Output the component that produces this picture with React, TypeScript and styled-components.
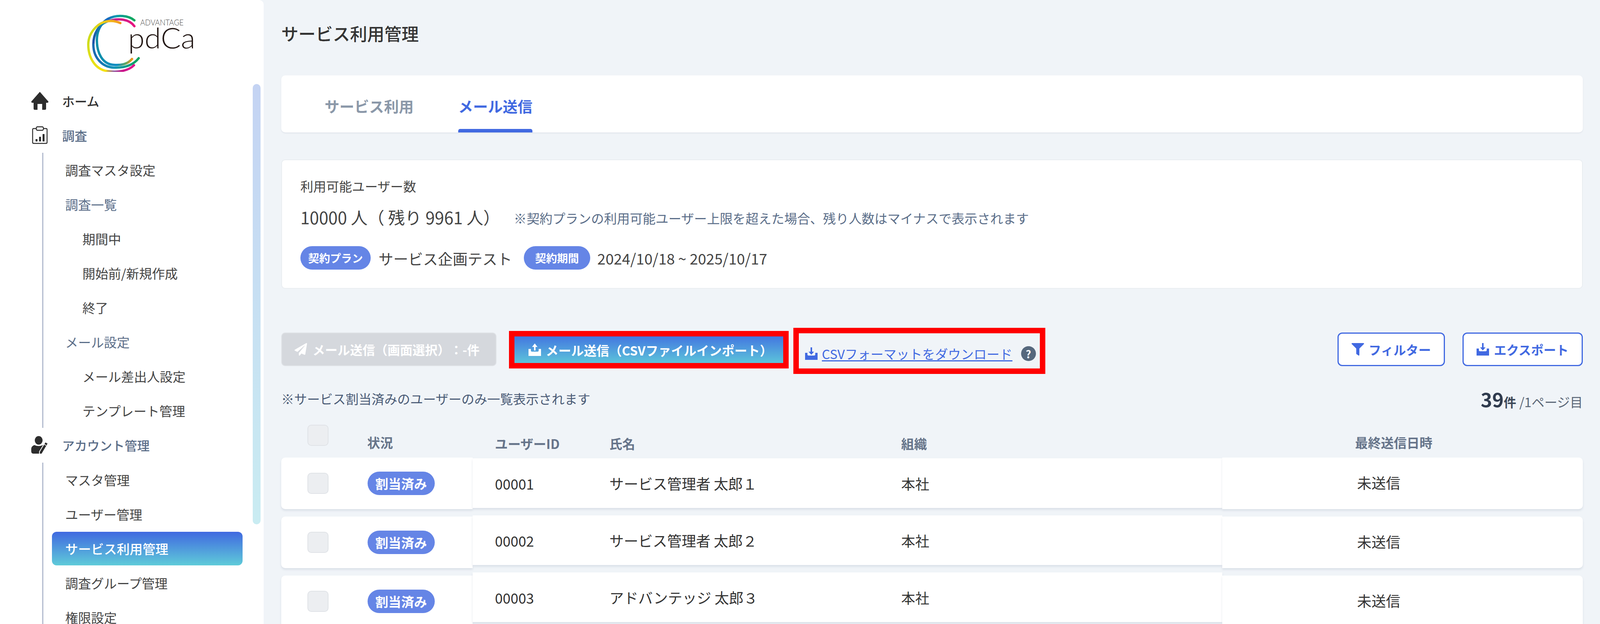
import React from "react";
import styled, { createGlobalStyle } from "styled-components";
import { FaFilter, FaPaperPlane } from "react-icons/fa";

const FONT = `"Noto Sans CJK JP", "Noto Sans", sans-serif`;
const BLUE = "#4169e1";
const SLATE = "#5a6d88";

const GlobalStyle = createGlobalStyle`
  html, body {
    margin: 0;
    height: 100%;
    overflow: hidden;
    background: #f0f4f8;
    font-family: ${FONT};
    text-spacing-trim: space-all;
  }
  * { box-sizing: border-box; }
`;

const Page = styled.div`
  display: flex;
  width: 100%;
  height: 100vh;
  overflow: hidden;
`;

/* ---------- sidebar ---------- */

const Sidebar = styled.aside`
  position: relative;
  flex: 0 0 675px;
  background: #fff;
  border-radius: 0 12px 0 0;
  overflow: hidden;
`;

const LogoBox = styled.div`
  height: 214px;
  padding: 34px 0 0 220px;
`;

const Thumb = styled.div`
  position: absolute;
  left: 647px;
  top: 215px;
  width: 20px;
  height: 1127px;
  border-radius: 10px;
  background: linear-gradient(180deg, #c4d3f3 0%, #c9ecf2 100%);
`;

const Nav = styled.nav`
  display: flex;
  flex-direction: column;
  padding-left: 80px;
`;

const NavHead = styled.div<{ $home?: boolean }>`
  display: flex;
  align-items: center;
  gap: 35px;
  height: 88px;
  font-size: 32px;
  font-weight: 500;
  color: ${(p) => (p.$home ? "#333" : SLATE)};
`;

const NavIcon = styled.span`
  display: flex;
  justify-content: center;
  align-items: center;
  width: 44px;
  height: 46px;
  color: #2d2d2d;
`;

const SubList = styled.div`
  display: flex;
  flex-direction: column;
  margin: 1px 0 0 28px;
  border-left: 3px solid #b3bccf;
`;

const SubItem = styled.div<{ $level: number; $label?: boolean }>`
  display: flex;
  align-items: center;
  height: 88px;
  padding-left: ${(p) => (p.$level === 2 ? 100 : 56)}px;
  font-size: 33px;
  color: ${(p) => (p.$label ? SLATE : "#444")};
`;

const ActiveItem = styled.div`
  display: flex;
  align-items: center;
  height: 86px;
  margin: 1px 54px 1px 22px;
  padding-left: 34px;
  border-radius: 12px;
  background: linear-gradient(180deg, #4069e0 0%, #5fcbd9 100%);
  font-size: 33px;
  font-weight: 500;
  color: #fff;
`;

/* ---------- main ---------- */

const Main = styled.main`
  flex: 1;
  min-width: 0;
  padding: 0 44px 0 45px;
`;

const Title = styled.h1`
  height: 193px;
  margin: 0;
  padding-top: 53px;
  font-size: 44px;
  line-height: 64px;
  font-weight: 500;
  color: #333;
`;

const TabCard = styled.div`
  display: flex;
  gap: 114px;
  height: 146px;
  padding-left: 111px;
  background: #fff;
  border-radius: 10px;
  box-shadow: 0 2px 3px rgba(170, 180, 195, 0.25);
`;

const Tab = styled.div<{ $active?: boolean }>`
  position: relative;
  display: flex;
  align-items: center;
  height: 146px;
  padding-top: 8px;
  font-size: 38px;
  font-weight: 700;
  color: ${(p) => (p.$active ? BLUE : "#8b98a9")};

  &::after {
    content: "";
    display: ${(p) => (p.$active ? "block" : "none")};
    position: absolute;
    left: 0;
    right: 0;
    bottom: 0;
    height: 9px;
    border-radius: 5px 5px 0 0;
    background: ${BLUE};
  }
`;

const InfoCard = styled.section`
  height: 331px;
  margin-top: 69px;
  padding: 43px 47px 0;
  background: #fff;
  border: 2px solid #e9edf1;
  border-radius: 10px;
`;

const InfoLabel = styled.div`
  font-size: 33px;
  line-height: 46px;
  color: #444;
`;

const CountRow = styled.div`
  display: flex;
  align-items: center;
  gap: 35px;
  height: 76px;
  margin-top: 18px;
`;

const CountText = styled.span`
  font-size: 43px;
  color: #444;
  white-space: pre;
`;

const CountNote = styled.span`
  font-size: 33px;
  color: ${SLATE};
  padding-top: 6px;
`;

const PlanRow = styled.div`
  display: flex;
  align-items: center;
  height: 60px;
  margin-top: 37px;
`;

const Pill = styled.span<{ $size?: number; $pad?: number }>`
  display: inline-flex;
  align-items: center;
  justify-content: center;
  height: 60px;
  padding: 0 ${(p) => p.$pad ?? 20}px;
  border-radius: 30px;
  background: #6585e6;
  color: #fff;
  font-size: ${(p) => p.$size ?? 28}px;
  font-weight: 700;
  white-space: nowrap;
`;

const PlanText = styled.span`
  margin: 0 30px 0 20px;
  font-size: 38px;
  color: #444;
`;

const DateText = styled.span`
  margin-left: 18px;
  font-size: 38px;
  color: #444;
`;

const Toolbar = styled.div`
  display: flex;
  align-items: flex-start;
  height: 118px;
  margin-top: 100px;
`;

const DisabledButton = styled.button`
  display: flex;
  align-items: center;
  gap: 14px;
  width: 551px;
  height: 86px;
  margin: 12px 32px 0 0;
  padding: 0 0 0 32px;
  background: #d5d8dd;
  border: 2px solid #dfe2e6;
  border-radius: 10px;
  color: #fff;
  font-family: ${FONT};
  font-size: 32px;
  font-weight: 700;
`;

const RedFrame = styled.div<{ $w: number; $h: number; $top: number }>`
  flex: none;
  width: ${(p) => p.$w}px;
  height: ${(p) => p.$h}px;
  margin: ${(p) => p.$top}px 12px 0 0;
  border: 14px solid #ff0000;
`;

const ImportButton = styled.button`
  display: flex;
  align-items: center;
  gap: 12px;
  width: 100%;
  height: 100%;
  padding: 0 0 0 36px;
  background: linear-gradient(180deg, #4377e0 0%, #5cc4da 100%);
  border: 0;
  color: #fff;
  font-family: ${FONT};
  font-size: 32.5px;
  font-weight: 700;
`;

const LinkRow = styled.div`
  display: flex;
  align-items: center;
  height: 100%;
  padding: 14px 0 0 16px;
  color: ${BLUE};
`;

const CsvLink = styled.a`
  margin: 0 22px 0 11px;
  font-size: 33px;
  color: ${BLUE};
  text-decoration: underline;
  text-decoration-thickness: 3px;
  text-underline-offset: 3px;
  white-space: nowrap;
`;

const HelpDot = styled.span`
  display: flex;
  align-items: center;
  justify-content: center;
  width: 38px;
  height: 38px;
  border-radius: 50%;
  background: #56687d;
  color: #fff;
  font-size: 27px;
  font-weight: 700;
`;

const ToolRight = styled.div`
  display: flex;
  gap: 45px;
  margin: 12px 0 0 auto;
`;

const OutlineButton = styled.button<{ $w: number }>`
  display: flex;
  align-items: center;
  justify-content: center;
  gap: 12px;
  width: ${(p) => p.$w}px;
  height: 86px;
  padding: 0;
  background: #fff;
  border: 3px solid ${BLUE};
  border-radius: 12px;
  color: ${BLUE};
  font-family: ${FONT};
  font-size: 32px;
  font-weight: 700;
`;

const NoteRow = styled.div`
  display: flex;
  align-items: center;
  justify-content: space-between;
  height: 60px;
  margin-top: 33px;
`;

const Note = styled.span`
  font-size: 33px;
  color: #4a5b76;
`;

const PageCount = styled.span`
  display: flex;
  align-items: baseline;
  font-size: 33px;
  color: #5b6777;
`;

const CountBig = styled.b`
  font-size: 50px;
  font-weight: 700;
  color: #2f3b4e;
`;

const CountUnit = styled.b`
  margin-right: 8px;
  font-size: 32px;
  color: #3d4959;
`;

/* ---------- table: frozen left and right columns around a middle part ---------- */

const Table = styled.div`
  display: flex;
`;

const FrozenGroup = styled.div<{ $w: number }>`
  flex: 0 0 ${(p) => p.$w}px;
  display: flex;
  flex-direction: column;
  gap: 19px;
`;

const MidGroup = styled.div`
  flex: 1;
  min-width: 0;
  display: flex;
  flex-direction: column;
  gap: 19px;
`;

const LeftHead = styled.div`
  display: flex;
  height: 121px;
  margin-bottom: -19px;
  padding: 37px 0 0 67px;
`;

const MidHead = styled.div`
  display: grid;
  grid-template-columns: 293px 747px 1fr;
  align-items: start;
  height: 123px;
  margin-bottom: -19px;
  padding: 61px 0 0 57px;
`;

const RightHead = styled.div`
  height: 121px;
  margin-bottom: -19px;
  padding: 58px 0 0 340px;
`;

const HeadLabel = styled.span`
  font-size: 33px;
  line-height: 48px;
  font-weight: 700;
  color: #66748a;
`;

const StatusHead = styled(HeadLabel)`
  margin: 21px 0 0 99px;
`;

const Box = styled.span`
  display: block;
  flex: none;
  width: 54px;
  height: 54px;
  background: #eceef1;
  border: 2px solid #e0e3e7;
  border-radius: 10px;
`;

const LeftCell = styled.div`
  flex: none;
  display: flex;
  align-items: center;
  gap: 100px;
  height: 132px;
  padding-left: 67px;
  background: #fff;
  border-radius: 10px 0 0 10px;
  box-shadow: 0 4px 5px rgba(170, 180, 195, 0.3);
`;

const MidCell = styled.div`
  flex: none;
  display: grid;
  grid-template-columns: 293px 747px 1fr;
  align-items: center;
  height: 127px;
  padding-left: 57px;
  background: #fff;
  box-shadow: 0 4px 5px rgba(170, 180, 195, 0.3);
  font-size: 36px;
  color: #333;
`;

const UserName = styled.span`
  font-size: 37px;
`;

const RightCell = styled.div`
  flex: none;
  display: flex;
  align-items: center;
  height: 132px;
  padding: 0 0 4px 345px;
  background: #fff;
  border-radius: 0 10px 10px 0;
  box-shadow: 0 4px 5px rgba(170, 180, 195, 0.3);
  font-size: 37px;
  color: #333;
`;

/* ---------- drawn icons ---------- */

const HomeIcon = () => (
  <svg width="44" height="46" viewBox="0 0 44 46" fill="currentColor">
    <path d="M22 0 L44 25 Q44 28 41 28 L38 28 L38 43 Q38 46 35 46 L28 46 L28 31 L16 31 L16 46 L9 46 Q6 46 6 43 L6 28 L3 28 Q0 28 0 25 Z" />
  </svg>
);

const SurveyIcon = () => (
  <svg width="40" height="46" viewBox="0 0 40 46" fill="none" stroke="currentColor" strokeWidth="2.4">
    <path d="M10 6 H4 Q1.5 6 1.5 9 V41 Q1.5 44 4 44 H36 Q38.5 44 38.5 41 V9 Q38.5 6 36 6 H30" />
    <rect x="11" y="1.5" width="18" height="9" rx="3" />
    <g fill="currentColor" stroke="none">
      <rect x="9" y="33" width="5" height="6" rx="1" />
      <rect x="18" y="27" width="5" height="12" rx="1" />
      <rect x="27" y="20" width="5" height="19" rx="1" />
    </g>
  </svg>
);

const AccountIcon = () => (
  <svg width="44" height="46" viewBox="0 0 44 46" fill="currentColor">
    <ellipse cx="19" cy="11" rx="10" ry="11" />
    <path d="M8 23 Q19 28 30 23 L33 25 L21 45 L6 45 Q0 45 0 39 V33 Q0 26 8 23 Z" />
    <path d="M36 15 L43 19 L27 46 L21 46 L21 40 Z" stroke="#fff" strokeWidth="2" />
    <path d="M33 21 L38 24" stroke="#fff" strokeWidth="2" />
  </svg>
);

const TrayIcon: React.FC<{ up?: boolean }> = ({ up }) => (
  <svg width="32" height="32" viewBox="0 0 32 32" fill="currentColor" style={{ flex: "none" }}>
    <path d="M0 14 H6 V18 Q6 21 9 21 H23 Q26 21 26 18 V14 H32 V32 H0 Z" />
    {up ? (
      <path d="M16 0 L23 9 H18 V18 H14 V9 H9 Z" />
    ) : (
      <path d="M14 0 H18 V11 H23 L16 19 L9 11 H14 Z" />
    )}
  </svg>
);

const Logo = () => (
  <svg width="290" height="150" viewBox="220 34 290 150">
    <defs>
      <linearGradient id="lgA" gradientUnits="userSpaceOnUse" x1="308" y1="59" x2="240" y2="80">
        <stop offset="0" stopColor="#f39a1e" />
        <stop offset="0.5" stopColor="#f5c818" />
        <stop offset="1" stopColor="#cfdc1c" />
      </linearGradient>
      <linearGradient id="lgB" gradientUnits="userSpaceOnUse" x1="230" y1="90" x2="270" y2="180">
        <stop offset="0" stopColor="#c9dc22" />
        <stop offset="1" stopColor="#f5e210" />
      </linearGradient>
      <linearGradient id="lgC" gradientUnits="userSpaceOnUse" x1="268" y1="178" x2="343" y2="167">
        <stop offset="0" stopColor="#f0dc18" />
        <stop offset="0.3" stopColor="#8e5aa0" />
        <stop offset="0.55" stopColor="#c8198c" />
        <stop offset="1" stopColor="#e0148c" />
      </linearGradient>
      <linearGradient id="lgD" gradientUnits="userSpaceOnUse" x1="344" y1="67" x2="240" y2="110">
        <stop offset="0" stopColor="#e6147f" />
        <stop offset="0.35" stopColor="#c4238f" />
        <stop offset="0.6" stopColor="#148fb0" />
        <stop offset="1" stopColor="#1c4fa8" />
      </linearGradient>
      <linearGradient id="lgE" gradientUnits="userSpaceOnUse" x1="250" y1="130" x2="355" y2="149">
        <stop offset="0" stopColor="#1a6ab0" />
        <stop offset="0.45" stopColor="#0c93b8" />
        <stop offset="1" stopColor="#0ba35c" />
      </linearGradient>
      <linearGradient id="lgF" gradientUnits="userSpaceOnUse" x1="344" y1="52" x2="250" y2="90">
        <stop offset="0" stopColor="#10a85a" />
        <stop offset="0.4" stopColor="#0c9bb0" />
        <stop offset="0.6" stopColor="#1668c0" />
        <stop offset="1" stopColor="#0f8fa8" />
      </linearGradient>
      <linearGradient id="lgG" gradientUnits="userSpaceOnUse" x1="255" y1="130" x2="338" y2="151">
        <stop offset="0" stopColor="#0f8fa8" />
        <stop offset="0.6" stopColor="#0a8cc4" />
        <stop offset="0.85" stopColor="#60a860" />
        <stop offset="1" stopColor="#f0951c" />
      </linearGradient>
    </defs>
    <g fill="none" strokeWidth="6" strokeLinecap="round">
      <path d="M344 52 C330 40 300 36 277 48 C258 58 248 80 248 103" stroke="url(#lgF)" />
      <path d="M248 103 C248 135 262 165 292 166 C310 167 326 165 338 151" stroke="url(#lgG)" />
      <path d="M344 67 C332 50 304 44 274 55 C252 64 239 86 239 114" stroke="url(#lgD)" />
      <path d="M239 114 C239 148 262 172 292 173 C318 174 340 168 355 149" stroke="url(#lgE)" />
      <path d="M308 59 C288 50 262 52 245 70 C233 82 226 98 226 114" stroke="url(#lgA)" />
      <path d="M226 114 C226 148 244 178 275 182" stroke="url(#lgB)" />
      <path d="M275 182 C300 186 328 182 343 167" stroke="url(#lgC)" />
    </g>
    <text x="359" y="65" fontFamily="Lato, sans-serif" fontWeight="300" fontSize="21" fill="#4a4a4a" textLength="111" lengthAdjust="spacingAndGlyphs">
      ADVANTAGE
    </text>
    <text x="328" y="124" fontFamily="Lato, sans-serif" fontWeight="300" fontSize="72" fill="#231815" textLength="172" lengthAdjust="spacingAndGlyphs">
      pdCa
    </text>
  </svg>
);

/* ---------- data ---------- */

const SURVEY_ITEMS = [
  { text: "調査マスタ設定", level: 1 },
  { text: "調査一覧", level: 1, label: true },
  { text: "期間中", level: 2 },
  { text: "開始前/新規作成", level: 2 },
  { text: "終了", level: 2 },
  { text: "メール設定", level: 1, label: true },
  { text: "メール差出人設定", level: 2 },
  { text: "テンプレート管理", level: 2 },
];

const ROWS = [
  { id: "00001", name: "サービス管理者 太郎１", org: "本社", sent: "未送信" },
  { id: "00002", name: "サービス管理者 太郎２", org: "本社", sent: "未送信" },
  { id: "00003", name: "アドバンテッジ 太郎３", org: "本社", sent: "未送信" },
];

const App: React.FC = () => {
  return (
    <Page>
      <GlobalStyle />
      <Sidebar>
        <LogoBox>
          <Logo />
        </LogoBox>
        <Nav>
          <NavHead $home>
            <NavIcon>
              <HomeIcon />
            </NavIcon>
            ホーム
          </NavHead>
          <NavHead>
            <NavIcon>
              <SurveyIcon />
            </NavIcon>
            調査
          </NavHead>
          <SubList>
            {SURVEY_ITEMS.map((item) => (
              <SubItem key={item.text} $level={item.level} $label={item.label}>
                {item.text}
              </SubItem>
            ))}
          </SubList>
          <NavHead>
            <NavIcon>
              <AccountIcon />
            </NavIcon>
            アカウント管理
          </NavHead>
          <SubList>
            <SubItem $level={1}>マスタ管理</SubItem>
            <SubItem $level={1}>ユーザー管理</SubItem>
            <ActiveItem>サービス利用管理</ActiveItem>
            <SubItem $level={1}>調査グループ管理</SubItem>
            <SubItem $level={1}>権限設定</SubItem>
          </SubList>
        </Nav>
        <Thumb />
      </Sidebar>

      <Main>
        <Title>サービス利用管理</Title>

        <TabCard>
          <Tab>サービス利用</Tab>
          <Tab $active>メール送信</Tab>
        </TabCard>

        <InfoCard>
          <InfoLabel>利用可能ユーザー数</InfoLabel>
          <CountRow>
            <CountText>10000 人（ 残り 9961 人）</CountText>
            <CountNote>※契約プランの利用可能ユーザー上限を超えた場合、残り人数はマイナスで表示されます</CountNote>
          </CountRow>
          <PlanRow>
            <Pill>契約プラン</Pill>
            <PlanText>サービス企画テスト</PlanText>
            <Pill $pad={29}>契約期間</Pill>
            <DateText>2024/10/18 ~ 2025/10/17</DateText>
          </PlanRow>
        </InfoCard>

        <Toolbar>
          <DisabledButton>
            <FaPaperPlane size={32} />
            メール送信（画面選択）：-件
          </DisabledButton>
          <RedFrame $w={716} $h={96} $top={8}>
            <ImportButton>
              <TrayIcon up />
              メール送信（CSVファイルインポート）
            </ImportButton>
          </RedFrame>
          <RedFrame $w={645} $h={118} $top={0}>
            <LinkRow>
              <TrayIcon />
              <CsvLink>CSVフォーマットをダウンロード</CsvLink>
              <HelpDot>?</HelpDot>
            </LinkRow>
          </RedFrame>
          <ToolRight>
            <OutlineButton $w={275}>
              <FaFilter size={32} />
              フィルター
            </OutlineButton>
            <OutlineButton $w={308}>
              <TrayIcon />
              エクスポート
            </OutlineButton>
          </ToolRight>
        </Toolbar>

        <NoteRow>
          <Note>※サービス割当済みのユーザーのみ一覧表示されます</Note>
          <PageCount>
            <CountBig>39</CountBig>
            <CountUnit>件</CountUnit>/1ページ目
          </PageCount>
        </NoteRow>

        <Table>
          <FrozenGroup $w={490}>
            <LeftHead>
              <Box />
              <StatusHead>状況</StatusHead>
            </LeftHead>
            {ROWS.map((row) => (
              <LeftCell key={row.id}>
                <Box />
                <Pill $size={33}>割当済み</Pill>
              </LeftCell>
            ))}
            <LeftCell />
          </FrozenGroup>

          <MidGroup>
            <MidHead>
              <HeadLabel>ユーザーID</HeadLabel>
              <HeadLabel>氏名</HeadLabel>
              <HeadLabel>組織</HeadLabel>
            </MidHead>
            {ROWS.map((row) => (
              <MidCell key={row.id}>
                <span>{row.id}</span>
                <UserName>{row.name}</UserName>
                <span>{row.org}</span>
              </MidCell>
            ))}
          </MidGroup>

          <FrozenGroup $w={923}>
            <RightHead>
              <HeadLabel>最終送信日時</HeadLabel>
            </RightHead>
            {ROWS.map((row) => (
              <RightCell key={row.id}>{row.sent}</RightCell>
            ))}
            <RightCell />
          </FrozenGroup>
        </Table>
      </Main>
    </Page>
  );
};

export default App;
